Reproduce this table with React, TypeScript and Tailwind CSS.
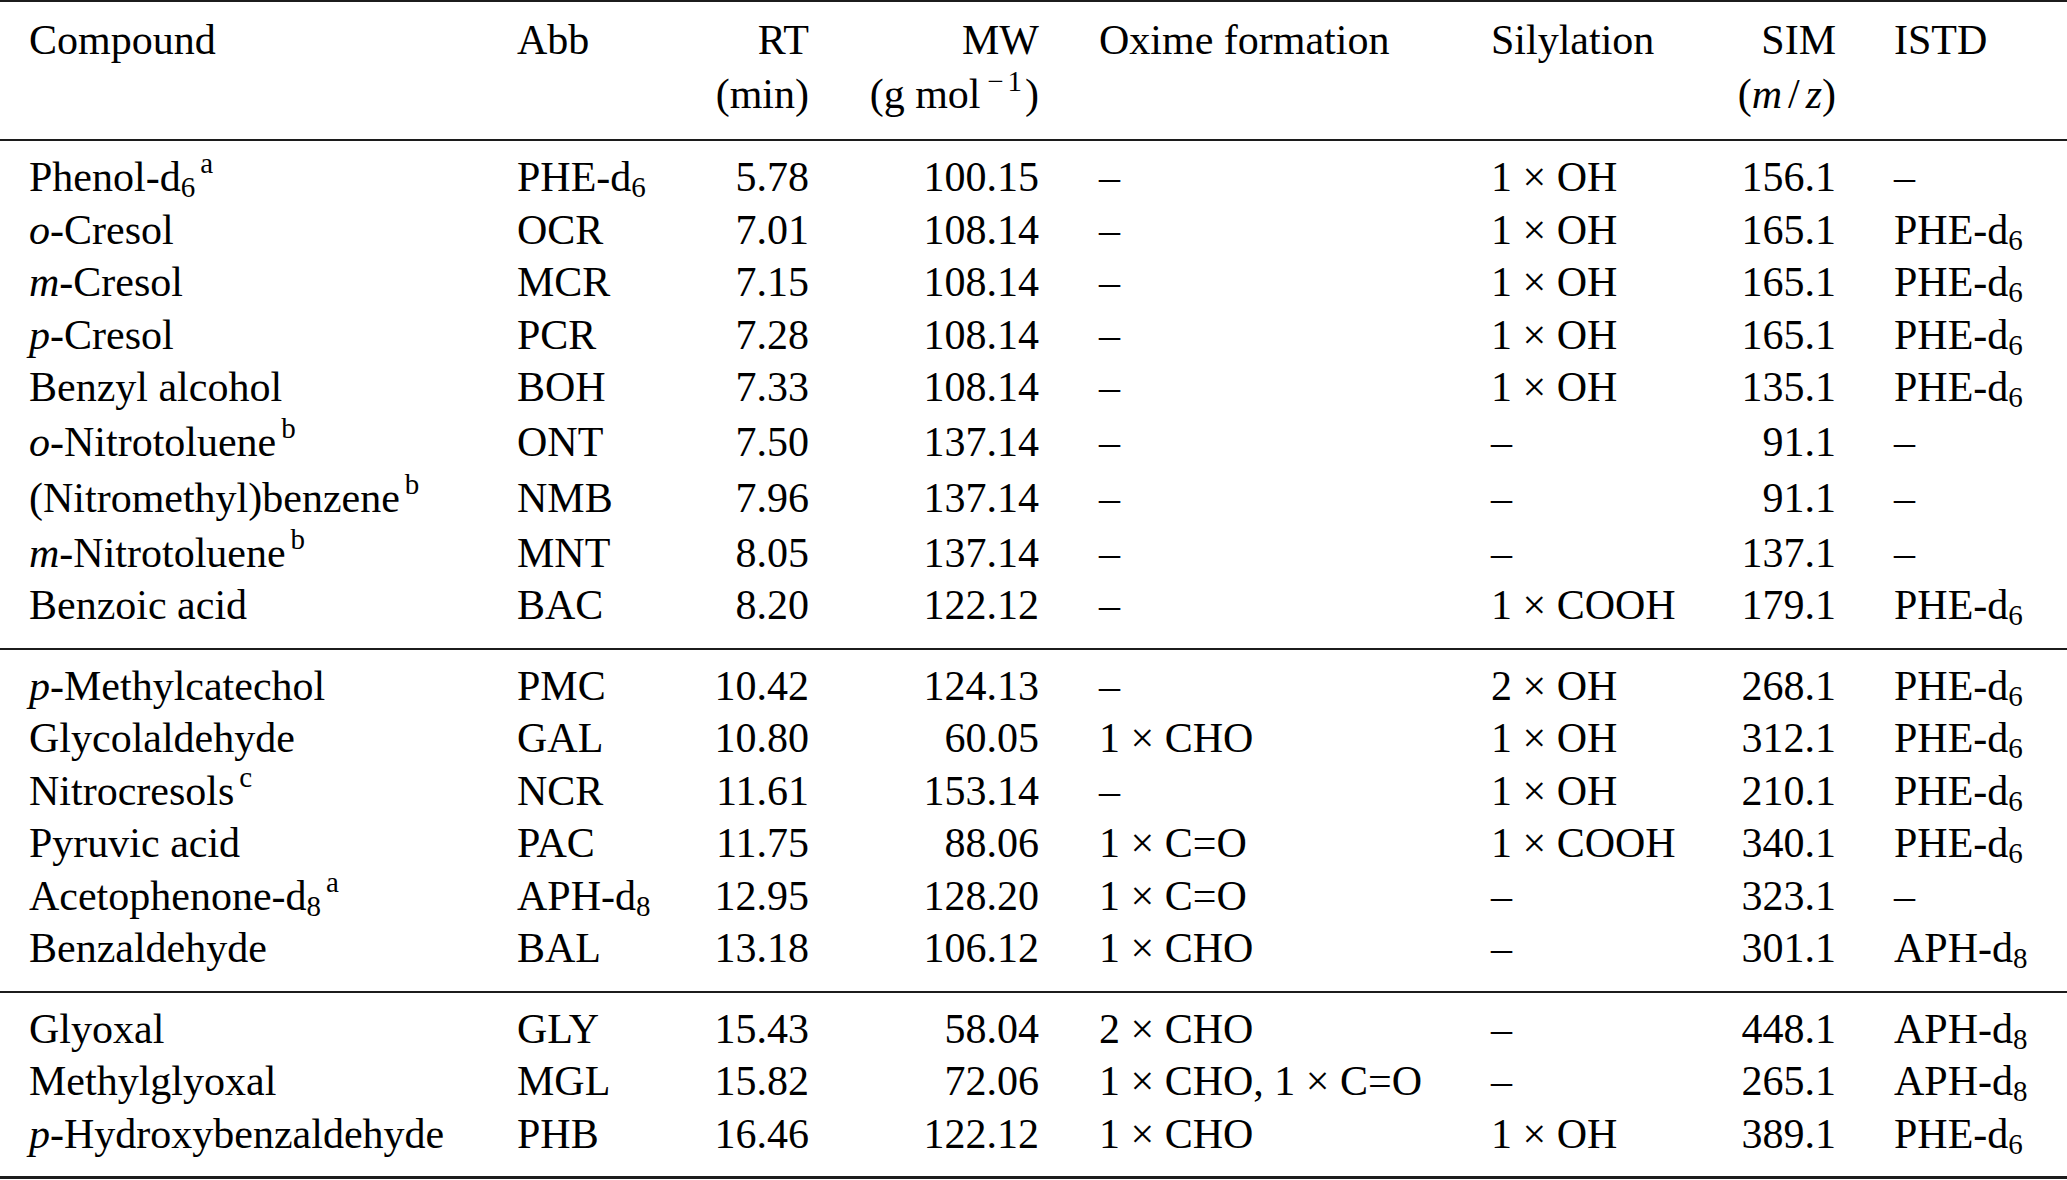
import React from "react";

const Sub = ({ children }: { children: React.ReactNode }) => (
  <span className="relative top-[6px] text-[29px] leading-none">{children}</span>
);
const Sup = ({ children }: { children: React.ReactNode }) => (
  <span className="relative -top-[18px] ml-[5px] text-[29px] leading-none">{children}</span>
);

type RowData = {
  name: React.ReactNode;
  abb: React.ReactNode;
  rt: string;
  mw: string;
  ox: string;
  sil: string;
  sim: string;
  istd: React.ReactNode;
  extra?: string;
};

const PHE = (
  <>
    PHE-d<Sub>6</Sub>
  </>
);
const APH = (
  <>
    APH-d<Sub>8</Sub>
  </>
);

const D = "–";

const group1: RowData[] = [
  { name: <>Phenol-d<Sub>6</Sub><Sup>a</Sup></>, abb: PHE, rt: "5.78", mw: "100.15", ox: D, sil: "1 × OH", sim: "156.1", istd: D },
  { name: <><i>o</i>-Cresol</>, abb: "OCR", rt: "7.01", mw: "108.14", ox: D, sil: "1 × OH", sim: "165.1", istd: PHE },
  { name: <><i>m</i>-Cresol</>, abb: "MCR", rt: "7.15", mw: "108.14", ox: D, sil: "1 × OH", sim: "165.1", istd: PHE },
  { name: <><i>p</i>-Cresol</>, abb: "PCR", rt: "7.28", mw: "108.14", ox: D, sil: "1 × OH", sim: "165.1", istd: PHE },
  { name: "Benzyl alcohol", abb: "BOH", rt: "7.33", mw: "108.14", ox: D, sil: "1 × OH", sim: "135.1", istd: PHE },
  { name: <><i>o</i>-Nitrotoluene<Sup>b</Sup></>, abb: "ONT", rt: "7.50", mw: "137.14", ox: D, sil: D, sim: "91.1", istd: D, extra: "pt-[2px]" },
  { name: <>(Nitromethyl)benzene<Sup>b</Sup></>, abb: "NMB", rt: "7.96", mw: "137.14", ox: D, sil: D, sim: "91.1", istd: D, extra: "pt-[4px]" },
  { name: <><i>m</i>-Nitrotoluene<Sup>b</Sup></>, abb: "MNT", rt: "8.05", mw: "137.14", ox: D, sil: D, sim: "137.1", istd: D, extra: "pt-[2px]" },
  { name: "Benzoic acid", abb: "BAC", rt: "8.20", mw: "122.12", ox: D, sil: "1 × COOH", sim: "179.1", istd: PHE },
];

const group2: RowData[] = [
  { name: <><i>p</i>-Methylcatechol</>, abb: "PMC", rt: "10.42", mw: "124.13", ox: D, sil: "2 × OH", sim: "268.1", istd: PHE },
  { name: "Glycolaldehyde", abb: "GAL", rt: "10.80", mw: "60.05", ox: "1 × CHO", sil: "1 × OH", sim: "312.1", istd: PHE },
  { name: <>Nitrocresols<Sup>c</Sup></>, abb: "NCR", rt: "11.61", mw: "153.14", ox: D, sil: "1 × OH", sim: "210.1", istd: PHE },
  { name: "Pyruvic acid", abb: "PAC", rt: "11.75", mw: "88.06", ox: "1 × C=O", sil: "1 × COOH", sim: "340.1", istd: PHE },
  { name: <>Acetophenone-d<Sub>8</Sub><Sup>a</Sup></>, abb: APH, rt: "12.95", mw: "128.20", ox: "1 × C=O", sil: D, sim: "323.1", istd: D },
  { name: "Benzaldehyde", abb: "BAL", rt: "13.18", mw: "106.12", ox: "1 × CHO", sil: D, sim: "301.1", istd: APH },
];

const group3: RowData[] = [
  { name: "Glyoxal", abb: "GLY", rt: "15.43", mw: "58.04", ox: "2 × CHO", sil: D, sim: "448.1", istd: APH },
  { name: "Methylglyoxal", abb: "MGL", rt: "15.82", mw: "72.06", ox: "1 × CHO, 1 × C=O", sil: D, sim: "265.1", istd: APH },
  { name: <><i>p</i>-Hydroxybenzaldehyde</>, abb: "PHB", rt: "16.46", mw: "122.12", ox: "1 × CHO", sil: "1 × OH", sim: "389.1", istd: PHE },
];

const GRID =
  "grid grid-cols-[488px_183px_109px_230px_452px_209px_136px_1fr] pl-[29px] whitespace-nowrap";

function Row({ r }: { r: RowData }) {
  return (
    <div className={`${GRID} leading-[52.5px] ${r.extra ?? ""}`}>
      <div>{r.name}</div>
      <div>{r.abb}</div>
      <div className="text-right">{r.rt}</div>
      <div className="text-right">{r.mw}</div>
      <div className="pl-[60px]">{r.ox}</div>
      <div>{r.sil}</div>
      <div className="text-right">{r.sim}</div>
      <div className="pl-[58px]">{r.istd}</div>
    </div>
  );
}

function Group({ rows }: { rows: RowData[] }) {
  return (
    <div className="pt-[10px] pb-[16px]">
      {rows.map((r, i) => (
        <Row key={i} r={r} />
      ))}
    </div>
  );
}

const Rule = () => <div className="h-[2px] bg-[#1c1c1c]" />;

export default function App() {
  return (
    <div
      className="w-[2067px] h-[1180px] bg-white text-[42px] text-black overflow-hidden"
      style={{ fontFamily: '"Liberation Serif", "Times New Roman", serif' }}
    >
      <Rule />
      <div className={`${GRID} leading-[54px] pt-[11px] pb-[18px]`}>
        <div>Compound</div>
        <div>Abb</div>
        <div className="text-right">
          <div>RT</div>
          <div>(min)</div>
        </div>
        <div className="text-right">
          <div>MW</div>
          <div>
            (g mol
            <span className="relative -top-[17px] ml-[3px] pr-[3px] text-[29px] leading-none">
              <span className="inline-block w-[24px] text-center">−</span>1
            </span>
            )
          </div>
        </div>
        <div className="pl-[60px]">Oxime formation</div>
        <div>Silylation</div>
        <div className="text-right">
          <div>SIM</div>
          <div>
            (<i>m</i>
            <span className="mx-[6px]">/</span>
            <i>z</i>)
          </div>
        </div>
        <div className="pl-[58px]">ISTD</div>
      </div>
      <Rule />
      <Group rows={group1} />
      <Rule />
      <Group rows={group2} />
      <Rule />
      <Group rows={group3} />
      <div className="h-[3px] bg-[#1c1c1c]" />
    </div>
  );
}
